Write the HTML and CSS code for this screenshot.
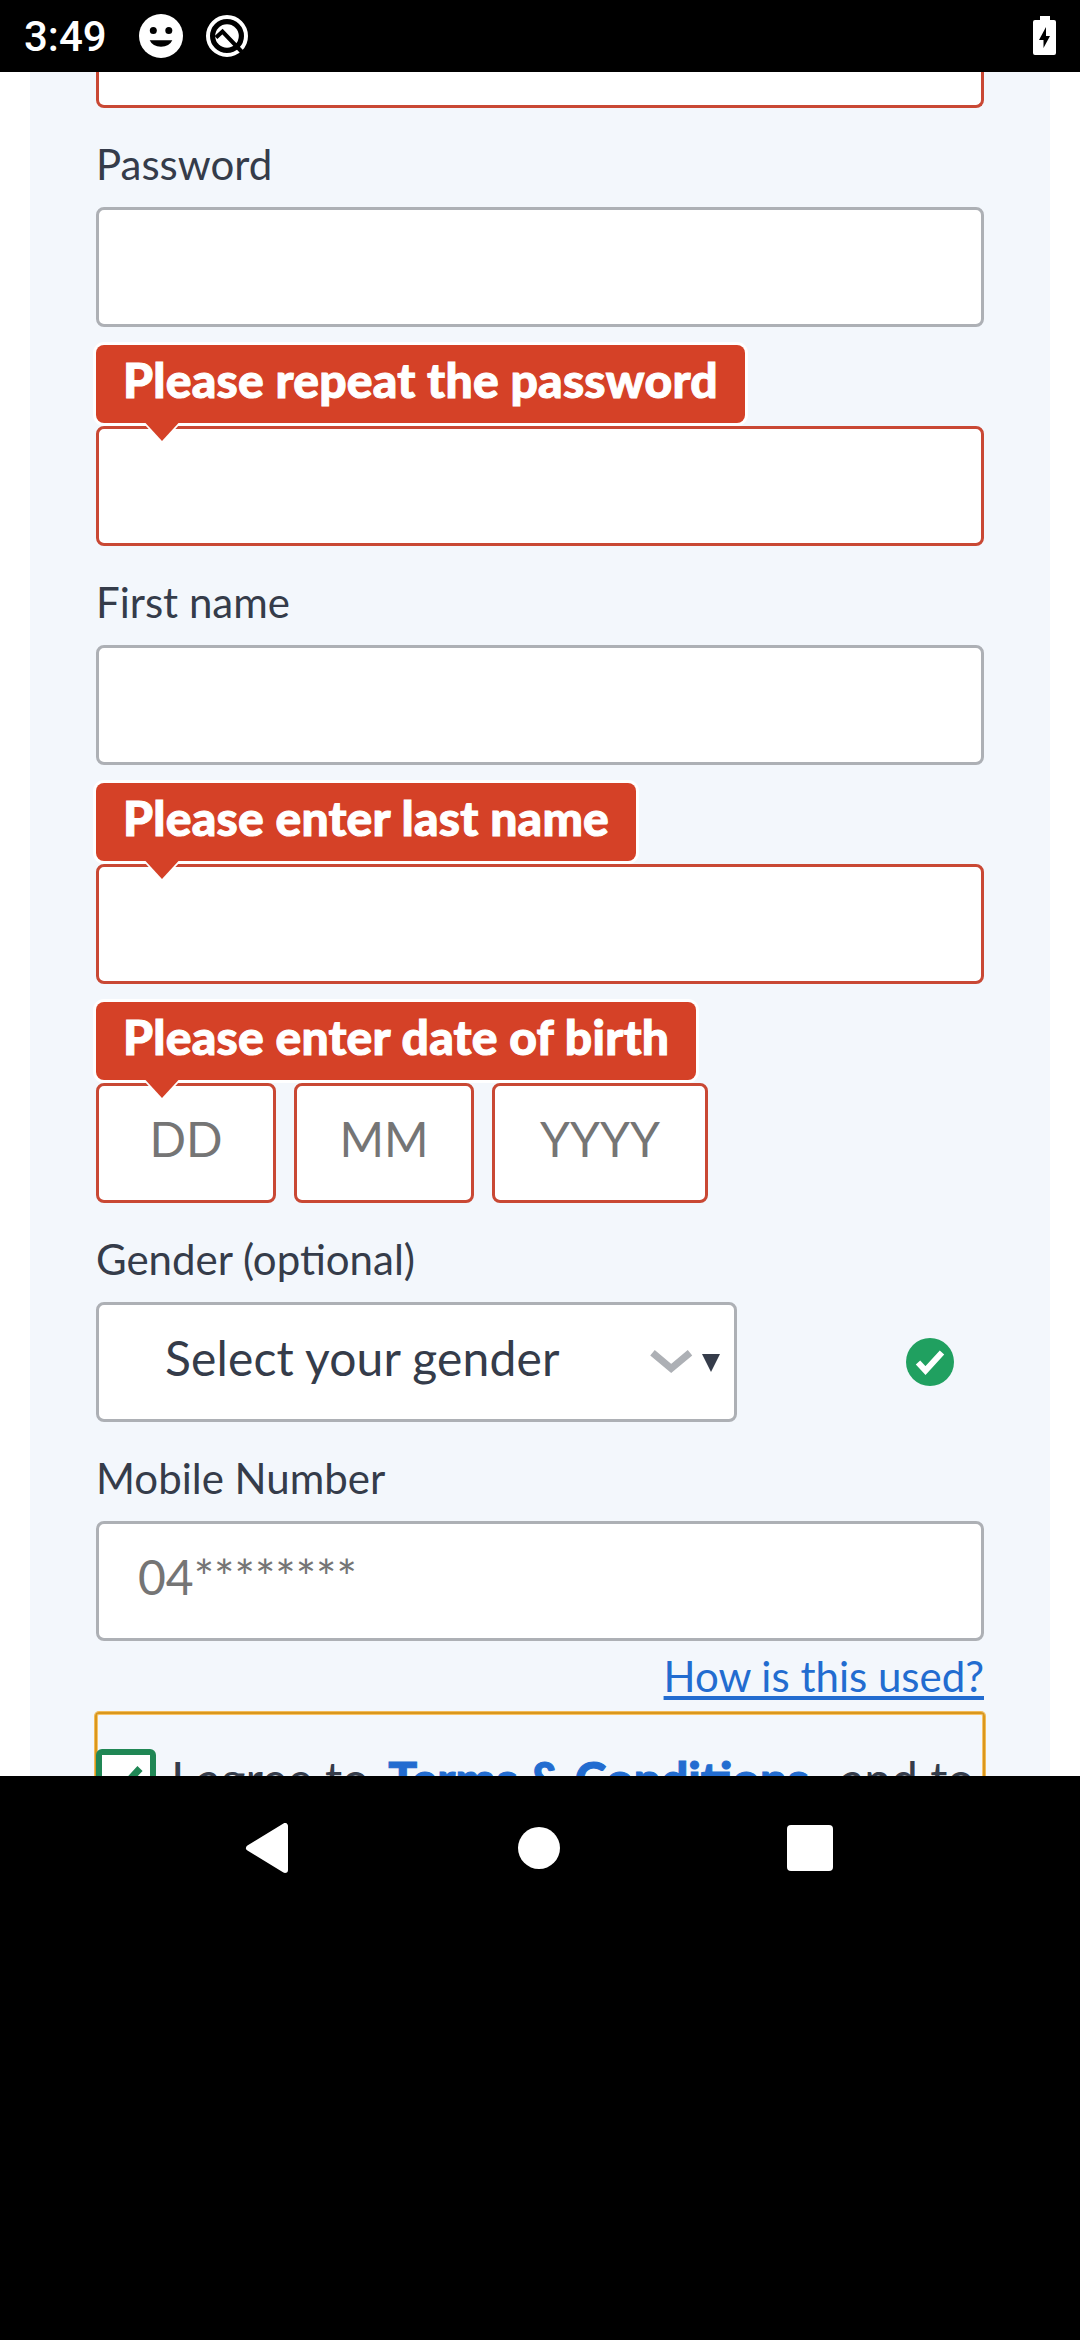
FILE: index.html
```html
<!DOCTYPE html>
<html lang="en">
<head>
<meta charset="utf-8">
<title>Register</title>
<link rel="stylesheet" href="styles.css">
</head>
<body>
<div class="status-bar">
  <span class="clock">3:49</span>
  <svg class="face" width="44" height="44" viewBox="0 0 44 44"><circle cx="22" cy="22" r="22" fill="#fff"/><circle cx="14.3" cy="16.5" r="3.5"/><circle cx="29.8" cy="16.5" r="3.5"/><path d="M10.7 26.3h22.6a12 9.6 0 0 1-22.6 0z"/></svg>
  <svg class="q-icon" width="44" height="44" viewBox="0 0 44 44"><circle cx="22" cy="22" r="19" fill="none" stroke="#fff" stroke-width="4"/><circle cx="22" cy="22" r="11.8" fill="#fff"/><path d="M11 23.500l6.500-6L37 38" fill="none" stroke="#000" stroke-width="4"/></svg>
  <svg class="battery" width="23" height="39" viewBox="0 0 23 39"><path d="M7 0h10v4h4a2 2 0 0 1 2 2v31a2 2 0 0 1-2 2H2a2 2 0 0 1-2-2V6a2 2 0 0 1 2-2h5z" fill="#fff"/><path d="M13 11L6 24h4.500v8L17 20h-4z"/></svg>
</div>
<main class="viewport">
  <form class="panel">
    <div class="field-tail"></div>
    <label class="label">Password</label>
    <input class="field" type="password">
    <div class="tip">Please repeat the password<svg class="arrow" width="38" height="20" viewBox="0 0 38 20"><path d="M0 0h38L19 20z" fill="#fff"/><path d="M2.500 0h33L19 18z" fill="#d54127"/></svg></div>
    <input class="field error" type="password">
    <label class="label">First name</label>
    <input class="field" type="text">
    <div class="tip">Please enter last name<svg class="arrow" width="38" height="20" viewBox="0 0 38 20"><path d="M0 0h38L19 20z" fill="#fff"/><path d="M2.500 0h33L19 18z" fill="#d54127"/></svg></div>
    <input class="field error" type="text">
    <div class="tip">Please enter date of birth<svg class="arrow" width="38" height="20" viewBox="0 0 38 20"><path d="M0 0h38L19 20z" fill="#fff"/><path d="M2.500 0h33L19 18z" fill="#d54127"/></svg></div>
    <div class="date-row">
      <input class="field error day" placeholder="DD">
      <input class="field error day" placeholder="MM">
      <input class="field error year" placeholder="YYYY">
    </div>
    <label class="label">Gender (optional)</label>
    <div class="gender-row">
      <div class="field select">
        <span class="select-text">Select your gender</span>
        <svg class="select-marks" width="70" height="24" viewBox="0 0 70 24"><path d="M2.500 2.800L21.200 18.500 40 2.800" fill="none" stroke="#adb0b5" stroke-width="7"/><path d="M52 4h18l-9 18z" fill="#353c4a"/></svg>
      </div>
      <svg class="valid" width="48" height="48" viewBox="0 0 48 48"><circle cx="24" cy="24" r="24" fill="#20a060"/><path d="M12 24.500l7.500 8L36 14.500" fill="none" stroke="#fff" stroke-width="6"/></svg>
    </div>
    <label class="label">Mobile Number</label>
    <input class="field mobile" type="tel" placeholder="04********">
    <a class="help">How is this used?</a>
    <div class="consent">
      <svg class="checkbox" width="60" height="60" viewBox="0 0 60 60"><rect x="3" y="3" width="54" height="54" rx="3" fill="#fff" stroke="#208755" stroke-width="6"/><path d="M14 30l10 11L44 19.500" fill="none" stroke="#208755" stroke-width="7"/></svg>
      <span class="agree">I agree to</span>
      <a class="terms">Terms &amp; Conditions</a>
      <span class="and">and to</span>
    </div>
  </form>
</main>
<nav class="nav-bar">
  <svg width="46" height="50" viewBox="0 0 46 50"><path d="M4 25L40 3v44z" fill="#fff" stroke="#fff" stroke-width="6" stroke-linejoin="round"/></svg>
  <svg width="46" height="50" viewBox="0 0 46 50"><circle cx="23" cy="25" r="21" fill="#fff"/></svg>
  <svg width="46" height="50" viewBox="0 0 46 50"><rect x="0" y="2" width="46" height="46" rx="4" fill="#fff"/></svg>
</nav>
</body>
</html>
```
FILE: styles.css
```css
* { box-sizing: border-box; }
body {
  margin: 0;
  width: 1080px;
  height: 2340px;
  overflow: hidden;
  background: #000;
  color: #353c4a;
  font-family: Lato, "Liberation Sans", sans-serif;
}
svg { display: block; flex: none; }
.status-bar {
  display: flex;
  align-items: flex-start;
  height: 72px;
  padding: 0 24px;
}
.clock {
  width: 115px;
  font: 500 42px/72px Roboto, sans-serif;
  color: #fff;
  padding-top: 1px;
}
.face { margin-top: 14px; }
.q-icon { margin: 14px 0 0 22px; }
.battery { margin: 16px 0 0 auto; }
.viewport {
  height: 1704px;
  overflow: hidden;
  background: #fff;
  padding: 0 30px;
}
.panel {
  display: flex;
  flex-direction: column;
  height: 1800px;
  padding: 0 66px;
  background: #f3f7fc;
}
.field-tail {
  flex: none;
  height: 36px;
  background: #fff;
  border: 3px solid #c94834;
  border-top: 0;
  border-radius: 0 0 8px 8px;
}
.label {
  flex: none;
  height: 78px;
  margin: 18px 0 3px;
  font-size: 42px;
  line-height: 77px;
}
.field {
  flex: none;
  width: 888px;
  height: 120px;
  margin: 0;
  padding: 0 40px 9px;
  border: 3px solid #adb0b5;
  border-radius: 8px;
  background: #fff;
  color: #353c4a;
  font: 48px/105px Lato, "Liberation Sans", sans-serif;
}
.field::placeholder { color: #757575; opacity: 1; }
.error { border-color: #c94834; }
.tip {
  position: relative;
  flex: none;
  align-self: flex-start;
  height: 78px;
  margin: 18px 0 3px;
  padding: 0 27px;
  border-radius: 8px;
  background: #d54127;
  box-shadow: 0 0 0 3px #fff;
  color: #fff;
  font-size: 48px;
  font-weight: 900;
  line-height: 69px;
  letter-spacing: 0.22px;
  -webkit-text-stroke: 1px #fff;
}
.arrow { position: absolute; left: 47px; top: 78px; }
.date-row { display: flex; gap: 18px; }
.day, .year { padding: 0 0 9px; text-align: center; }
.day { width: 180px; }
.year { width: 216px; }
.gender-row {
  display: flex;
  align-items: center;
  justify-content: space-between;
  padding-right: 30px;
}
.select {
  display: flex;
  align-items: center;
  justify-content: space-between;
  width: 641px;
  padding: 0 14px 0 66px;
}
.select-text { padding-bottom: 9px; letter-spacing: 0.12px; }
.mobile { padding-left: 39px; }
.help {
  flex: none;
  align-self: flex-end;
  height: 70px;
  font-size: 42px;
  line-height: 70px;
  color: #226cd0;
  text-decoration: underline;
  text-decoration-thickness: 4px;
  text-underline-offset: 4px;
}
.consent {
  display: flex;
  flex: none;
  height: 150px;
  margin: 1px -1px 0;
  padding-top: 35px;
  border: 2px solid #d9971d;
  border-radius: 4px;
  box-shadow: 0 0 0 1px #f3bb57, inset 0 0 0 1px #f8c368;
  font-size: 48px;
  line-height: 60px;
  white-space: nowrap;
}
.checkbox { margin-left: -1px; }
.agree { margin-left: 15px; }
.terms {
  margin-left: 19px;
  color: #226cd0;
  font-weight: 900;
  -webkit-text-stroke: 1px #226cd0;
}
.and { margin-left: 32px; }
.nav-bar {
  display: flex;
  justify-content: space-between;
  padding: 47px 247px 0 245px;
}
```
